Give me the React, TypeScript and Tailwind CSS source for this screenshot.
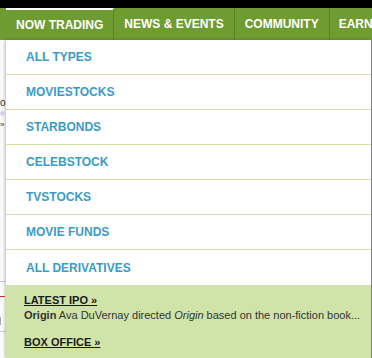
import React from "react";

const items = [
  "ALL TYPES",
  "MOVIESTOCKS",
  "STARBONDS",
  "CELEBSTOCK",
  "TVSTOCKS",
  "MOVIE FUNDS",
  "ALL DERIVATIVES",
];

export default function App() {
  return (
    <div
      className="w-[372px] h-[358px] overflow-hidden bg-[#f7f7f7] flex flex-col"
      style={{ fontFamily: '"Liberation Sans", Arial, sans-serif' }}
    >
      <div className="h-[8px] bg-black shrink-0" />
      <nav className="h-[32px] bg-[#6f9c31] flex pl-[6px] shrink-0 whitespace-nowrap overflow-hidden">
        <div className="h-full shrink-0 border-t-2 border-white border-r border-r-[#5a8424] px-[10px] flex items-center text-[12px] font-bold text-white">
          NOW TRADING
        </div>
        <div className="h-full shrink-0 border-r border-[#5a8424] px-[10px] flex items-center text-[12px] font-bold text-white">
          NEWS &amp; EVENTS
        </div>
        <div className="h-full shrink-0 border-r border-[#5a8424] px-[10px] flex items-center text-[12px] font-bold text-white">
          COMMUNITY
        </div>
        <div className="h-full shrink-0 pl-[9px] flex items-center text-[12px] font-bold text-white">
          EARN
        </div>
      </nav>
      <div className="flex flex-1 min-h-0">
        <div className="w-[6px] shrink-0 bg-[#fafafa] flex flex-col text-[10px] leading-[12px] overflow-hidden">
          <div className="h-[57px]" />
          <div className="text-[#333]">o</div>
          <div className="text-[#7a8fd0] text-[6px] leading-[10px]">®</div>
          <div className="text-[#333] text-[8px]">»</div>
          <div className="h-[150px]" />
          <div className="h-[1px] bg-[#ccc]" />
          <div className="h-[14px]" />
          <div className="h-[1px] w-[5px] bg-[#c33]" />
          <div className="h-[20px]" />
          <div className="h-[8px] w-[3px] border-l border-[#aaa]" />
          <div className="h-[6px]" />
          <div className="h-[1px] bg-[#ccc]" />
        </div>
        <div className="w-[365px] shrink-0 bg-white flex flex-col shadow-[-1px_0_3px_rgba(0,0,0,0.25)] z-10">
          {items.map((t, i) => (
            <div
              key={t}
              className={
                "h-[35px] shrink-0 flex items-center pl-[20px] text-[12px] font-bold text-[#3a9bc6] " +
                (i < items.length - 1 ? "border-b border-[#cfe3a6]" : "")
              }
            >
              {t}
            </div>
          ))}
          <div className="flex-1 bg-[#d0e4aa] pl-[18px] pt-[9px] text-[11px] leading-[13px] text-[#333]">
            <div className="font-bold text-[#1a1a1a] underline">LATEST IPO »</div>
            <div className="mt-[2px] whitespace-nowrap">
              <b>Origin</b> Ava DuVernay directed <i>Origin</i> based on the non-fiction book...
            </div>
            <div className="mt-[14px] font-bold text-[#1a1a1a] underline">BOX OFFICE »</div>
          </div>
        </div>
        <div className="w-[1px] bg-[#888] shrink-0" />
      </div>
    </div>
  );
}
